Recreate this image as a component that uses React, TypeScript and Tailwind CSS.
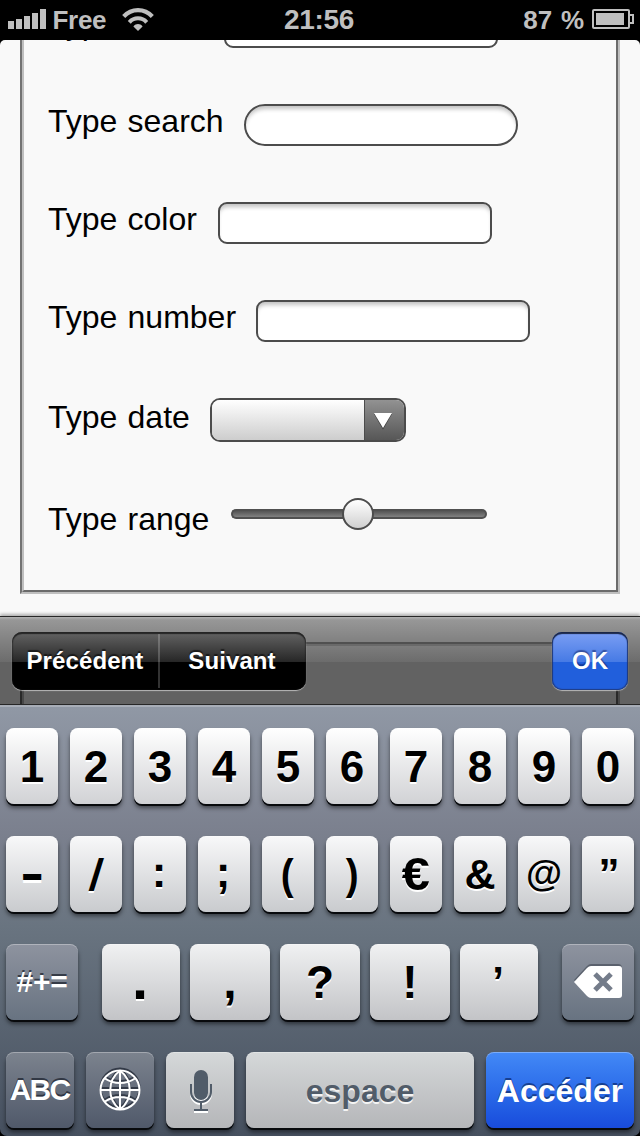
import type { ReactNode } from "react";

const inputClass =
  "h-[42px] w-[274px] shrink-0 border-2 border-[#4c4c4c] bg-white shadow-[inset_0_5px_4px_-2px_rgba(0,0,0,0.24)]";

function Row({ label, labelClass, children }: { label: string; labelClass: string; children: ReactNode }) {
  return (
    <div className="flex h-[98px] items-start">
      <span className={`shrink-0 whitespace-nowrap text-[32px] leading-[34px] text-black [word-spacing:1.300px] ${labelClass}`}>
        {label}
      </span>
      {children}
    </div>
  );
}

function StatusBar() {
  return (
    <header className="grid h-10 shrink-0 grid-cols-[1fr_auto_1fr] items-start bg-black px-2 font-bold text-[#bfbfbf]">
      <div className="flex items-start">
        <svg className="mt-2 h-[22px] w-[38px]" viewBox="0 0 38 22" fill="#bfbfbf">
          <path d="M0 13h6v8H0zM8 11h6v10H8zM16 8h6v13h-6zM24 5h6v16h-6zM32 1h6v20h-6z" />
        </svg>
        <span className="ml-[6.500px] w-[54px] text-[26px] leading-10 tracking-[-0.3px]">Free</span>
        <svg className="ml-[15.500px] mt-[7px] h-6 w-8" viewBox="0 0 32 24" fill="none" stroke="#bfbfbf">
          <path d="M1.700 9.500C9.500 1 22.500 1 30.300 9.500" strokeWidth="4.200" />
          <path d="M7.300 15.300C12 10 20 10 24.700 15.300" strokeWidth="4" />
          <path d="M11.400 19.500C14 16.300 18 16.300 20.600 19.500L16 24z" fill="#bfbfbf" stroke="none" />
        </svg>
      </div>
      <span className="pr-[2px] text-[28px] leading-10 tracking-[-0.3px]">21:56</span>
      <div className="flex items-start justify-end">
        <span className="mr-2 text-[26px] leading-10 [word-spacing:1.500px]">87 %</span>
        <svg className="-mr-[2px] mt-[9px] h-5 w-[42px]" viewBox="0 0 42 20">
          <rect x="1" y="1" width="36" height="18" rx="1" fill="none" stroke="#bfbfbf" strokeWidth="2" />
          <rect x="4" y="4" width="28" height="12" fill="#bfbfbf" />
          <path d="M38 6h3v8h-3" fill="none" stroke="#bfbfbf" strokeWidth="2" />
        </svg>
      </div>
    </header>
  );
}

function Form() {
  return (
    <main className="h-[576px] shrink-0 overflow-hidden rounded-t-[5px] bg-[#f9f9f9] px-5">
      <div className="-mt-[34px] h-[588px] border-2 border-t-0 border-b-[#bfbfbf] border-l-[#737373] border-r-[#bfbfbf]">
        <div className="h-[586px] border-2 border-t-0 border-b-[#6b6b6b] border-l-[#bfbfbf] border-r-[#6b6b6b] pl-6">
          <Row label="Type email" labelClass="w-[176px]">
            <div className={`${inputClass} rounded-[9px]`} />
          </Row>
          <Row label="Type search" labelClass="w-[196px]">
            <div className={`${inputClass} rounded-[21px]`} />
          </Row>
          <Row label="Type color" labelClass="w-[170px]">
            <div className={`${inputClass} rounded-[9px]`} />
          </Row>
          <Row label="Type number" labelClass="w-[208px]">
            <div className={`${inputClass} rounded-[9px]`} />
          </Row>
          <Row label="Type date" labelClass="w-[162px] pt-[2px]">
            <div className="flex h-11 w-[196px] overflow-hidden rounded-[10px] border-2 border-[#4c4c4c]">
              <div className="flex-1 bg-linear-to-b from-white to-[#cdcdcd]" />
              <div className="flex w-10 items-start border-l border-[#4c4c4c] bg-linear-to-b from-[#929292] to-[#575757] pl-2 pt-[12px]">
                <svg className="h-[18px] w-5" viewBox="0 0 20 18">
                  <path d="M1 2h18l-9 15.500z" fill="#3c3c3c" />
                  <path d="M1 1h18l-9 15z" fill="#fff" />
                </svg>
              </div>
            </div>
          </Row>
          <Row label="Type range" labelClass="w-[183px] pt-[6px]">
            <div className="mt-[2px] flex h-8 w-64 items-center">
              <div className="-mr-[2px] h-[10px] w-[113px] rounded-l-[5px] border-2 border-r-0 border-[#505050] bg-linear-to-b from-[#555] to-[#818181]" />
              <div className="z-10 size-8 shrink-0 rounded-full border-2 border-[#4c4c4c] bg-linear-to-b from-white to-[#d0d0d0]" />
              <div className="-ml-[2px] h-[10px] flex-1 rounded-r-[5px] border-2 border-l-0 border-[#505050] bg-linear-to-b from-[#555] to-[#818181]" />
            </div>
          </Row>
        </div>
      </div>
    </main>
  );
}

function Toolbar() {
  return (
    <div className="relative h-[89px] shrink-0 border-y border-[#272727] bg-[linear-gradient(#b2b2b2_0px,#979797_3px,#6c6c6c_45px,#626262_45px,#626262_100%)] shadow-[0_-2px_3px_rgba(0,0,0,0.3)]">
      <div className="absolute inset-x-5 bottom-0 top-[25px] border-2 border-b-0 border-l-[#292929] border-r-[#484848] border-t-[#505050]">
        <div className="h-full border-2 border-b-0 border-l-[#484848] border-r-[#292929] border-t-[#696969]" />
      </div>
      <div className="relative flex justify-between px-3 pt-[15px] text-2xl font-bold leading-[58px] text-white">
        <div className="flex h-[58px] w-[294px] overflow-hidden rounded-[10px] bg-[linear-gradient(#646464,#262626_30px,#000_30px)] text-center shadow-[0_1px_1px_rgba(255,255,255,0.55),inset_0_2px_1px_#252525,inset_0_0_2px_#111] [text-shadow:0_-2px_1px_rgba(0,0,0,0.55)]">
          <span className="w-[146px] tracking-[0.1px]">Précédent</span>
          <span className="my-[2px] w-[2px] bg-white/20" />
          <span className="w-[146px] pr-[2px] tracking-[0.1px]">Suivant</span>
        </div>
        <div className="h-[58px] w-[76px] rounded-[10px] bg-[linear-gradient(#7c9ff4,#467ae5_30px,#215fdc_30px,#215fdc)] text-center shadow-[0_1px_1px_rgba(255,255,255,0.55),inset_0_2px_1px_#1b2747,inset_0_0_1px_1px_#203c83] [text-shadow:0_-2px_1px_rgba(0,0,50,0.4)]">
          OK
        </div>
      </div>
    </div>
  );
}

const keyBase =
  "flex h-[76px] shrink-0 justify-center rounded-[8px] font-bold leading-[76px] shadow-[0_2px_0.5px_#080a0d,0_4px_4px_rgba(0,0,0,0.5),inset_0_1px_0_rgba(255,255,255,0.3)]";
const lightText = "text-black [text-shadow:0_2px_0_#fff]";
const darkText = "text-white [text-shadow:0_-2px_0_rgba(30,36,48,0.75)]";

function Key({ className, glyph = "", children }: { className: string; glyph?: string; children: ReactNode }) {
  return (
    <div className={`${keyBase} ${className}`}>
      <span className={`relative flex items-center whitespace-nowrap ${glyph}`}>{children}</span>
    </div>
  );
}

const digits = ["1", "2", "3", "4", "5", "6", "7", "8", "9", "0"];
const symbols = [
  { c: "–", g: "text-[44px] scale-x-[.83] scale-y-[1.400] -top-[2px]" },
  { c: "/", g: "text-[44px] top-[1px] -skew-x-[7deg]" },
  { c: ":", g: "text-[44px] -top-[2px] -left-[1px]" },
  { c: ";", g: "text-[44px] -top-[2px] -left-[1px]" },
  { c: "(", g: "text-[43px] scale-x-90 -left-[1px]" },
  { c: ")", g: "text-[43px] scale-x-90" },
  { c: "€", g: "text-[46px] scale-x-110" },
  { c: "&", g: "text-[43px]" },
  { c: "@", g: "text-[37px]" },
  { c: "”", g: "text-[42px] left-[1px]" },
];
const marks = [
  { c: ".", w: "w-[78px]", g: "text-[58px] -top-[3px] -left-[1px]" },
  { c: ",", w: "w-20", g: "text-[48px]" },
  { c: "?", w: "w-20", g: "text-[46px]" },
  { c: "!", w: "w-20", g: "text-[46px]" },
  { c: "’", w: "w-[78px]", g: "text-[42px] -left-[1px]" },
];

function GlobePaths() {
  return (
    <>
      <circle cx="21" cy="21" r="19.500" />
      <path d="M21 1.500v39M1.500 21h39M21 1.500c-13 10-13 29 0 39M21 1.500c13 10 13 29 0 39M6 9.500c9 6 21 6 30 0M6 32.500c9-6 21-6 30 0" />
    </>
  );
}

function MicPaths() {
  return (
    <>
      <rect x="5" y="0" width="14" height="30" rx="7" stroke="none" fill="currentColor" />
      <path d="M2 14v8a10 10 0 0 0 20 0v-8M12 32v8M5 40h14" fill="none" stroke="currentColor" strokeWidth="2" />
    </>
  );
}

function Keyboard() {
  return (
    <div className="h-[431px] shrink-0 bg-black">
      <div className="flex h-full flex-col gap-8 rounded-b-[7px] border-t-2 border-[#a9afb9] bg-[linear-gradient(#9098a5_0px,#7b808e_125px,#697480_220px,#46505f_430px)] px-[6px] pt-[21px]">
        <div className="flex gap-3">
          {digits.map((d) => (
            <Key key={d} className={`w-[52px] bg-linear-to-b from-white to-[#d1d2d5] ${lightText}`} glyph="text-[44px] top-[1px]">
              {d}
            </Key>
          ))}
        </div>
        <div className="flex gap-3">
          {symbols.map((s) => (
            <Key key={s.c} className={`w-[52px] bg-linear-to-b from-[#f8f8f9] to-[#c9cbce] ${lightText}`} glyph={s.g}>
              {s.c}
            </Key>
          ))}
        </div>
        <div className="flex justify-between">
          <Key className={`w-[72px] bg-linear-to-b from-[#8e939f] to-[#687381] ${darkText}`} glyph="text-[30px] tracking-[-0.3px]">
            #+=
          </Key>
          <div className="flex gap-[10px]">
            {marks.map((m) => (
              <Key key={m.c} className={`${m.w} bg-linear-to-b from-[#f0f1f2] to-[#c3c4c7] ${lightText}`} glyph={m.g}>
                {m.c}
              </Key>
            ))}
          </div>
          <Key className="w-[72px] bg-linear-to-b from-[#8e939f] to-[#687381]">
            <svg className="h-9 w-12" viewBox="0 0 48 36">
              <path d="M0 16L13 2Q15 0 17 0h27q4 0 4 4v24q0 4-4 4H17q-2 0-4-2z" fill="#3f4652" opacity=".6" />
              <path d="M0 18L13 4Q15 2 17 2h28q3 0 3 3v26q0 3-3 3H17q-2 0-4-2z" fill="#fff" />
              <path d="M21 10l16 16M37 10L21 26" stroke="#747c8a" strokeWidth="5" />
            </svg>
          </Key>
        </div>
        <div className="flex gap-3">
          <Key className={`w-[68px] bg-linear-to-b from-[#7c838e] to-[#50596a] ${darkText}`} glyph="text-[30px] tracking-[-1.800px] -left-[0.500px]">
            ABC
          </Key>
          <Key className="w-[68px] bg-linear-to-b from-[#7c838e] to-[#50596a]">
            <svg className="relative -top-[1px] h-[46px] w-[42px]" viewBox="0 -3 42 46" fill="none" strokeWidth="2">
              <g stroke="#333a47" transform="translate(0 -2)">
                <GlobePaths />
              </g>
              <g stroke="#fff">
                <GlobePaths />
              </g>
            </svg>
          </Key>
          <Key className="w-[68px] bg-linear-to-b from-[#d5d8d9] to-[#b5b6b9]">
            <svg className="relative left-[1px] top-[2px] h-11 w-6" viewBox="0 0 24 44">
              <g className="text-white" transform="translate(0 2)">
                <MicPaths />
              </g>
              <g className="text-[#515c69]">
                <MicPaths />
              </g>
            </svg>
          </Key>
          <Key className="w-[228px] bg-linear-to-b from-[#d5d8d9] to-[#b5b6b9] text-[#515c69] [text-shadow:0_2px_0_#f4f4f4]" glyph="text-[32px] top-[1px]">
            espace
          </Key>
          <Key className="w-[148px] bg-linear-to-b from-[#4389f6] to-[#194bdc] text-white [text-shadow:0_-2px_0_#173f91]" glyph="text-[32px] top-[1px]">
            Accéder
          </Key>
        </div>
      </div>
    </div>
  );
}

export default function App() {
  return (
    <div className="flex h-[1136px] w-[640px] flex-col overflow-hidden bg-black font-['Liberation_Sans',Arial,sans-serif]">
      <StatusBar />
      <Form />
      <Toolbar />
      <Keyboard />
    </div>
  );
}
